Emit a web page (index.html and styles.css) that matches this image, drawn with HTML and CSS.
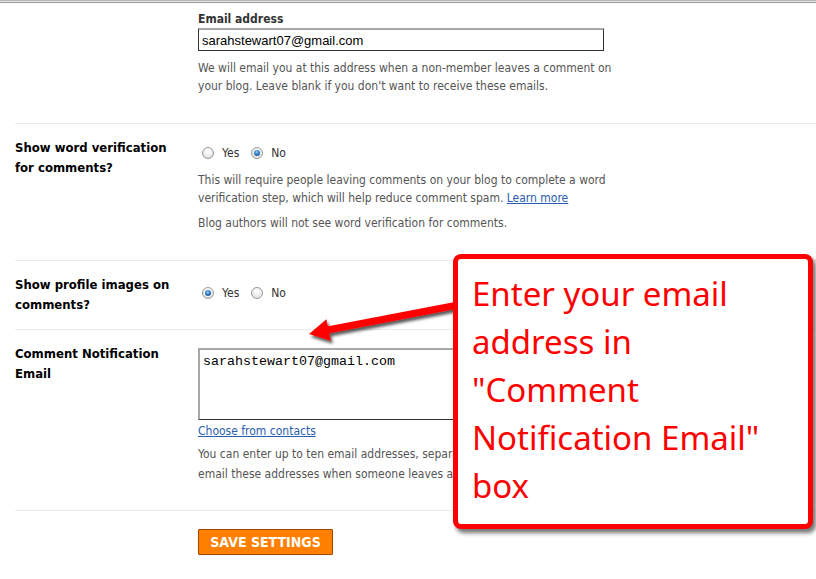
FILE: index.html
```html
<!DOCTYPE html>
<html>
<head>
<meta charset="utf-8">
<link rel="stylesheet" href="styles.css">
</head>
<body>
<div class="page">
  <div class="topline"></div>

  <div class="row first">
    <div class="label"></div>
    <div class="field">
      <div class="fieldlabel">Email address</div>
      <input class="textbox" type="text" value="sarahstewart07@gmail.com">
      <p class="help last">We will email you at this address when a non-member leaves a comment on<br>your blog. Leave blank if you don't want to receive these emails.</p>
    </div>
  </div>

  <div class="row">
    <div class="label">Show word verification<br>for comments?</div>
    <div class="field">
      <div class="radios r2">
        <span class="radio"></span><span class="opt">Yes</span>
        <span class="radio on"></span><span class="opt">No</span>
      </div>
      <p class="help">This will require people leaving comments on your blog to complete a word<br>verification step, which will help reduce comment spam. <a href="#">Learn more</a></p>
      <p class="help last">Blog authors will not see word verification for comments.</p>
    </div>
  </div>

  <div class="row">
    <div class="label">Show profile images on<br>comments?</div>
    <div class="field">
      <div class="radios r3">
        <span class="radio on"></span><span class="opt">Yes</span>
        <span class="radio"></span><span class="opt">No</span>
      </div>
    </div>
  </div>

  <div class="row">
    <div class="label">Comment Notification<br>Email</div>
    <div class="field">
      <textarea class="area">sarahstewart07@gmail.com</textarea>
      <a class="contacts" href="#">Choose from contacts</a>
      <p class="help last wide">You can enter up to ten email addresses, separated by commas. We will<br>email these addresses when someone leaves a comment on your blog.</p>
    </div>
  </div>

  <div class="actions">
    <button class="save">Save Settings</button>
  </div>

  <svg class="arrow" width="816" height="579" viewBox="0 0 816 579">
    <defs>
      <filter id="sh" x="-10%" y="-50%" width="120%" height="200%">
        <feDropShadow dx="2" dy="3" stdDeviation="1.5" flood-color="#000" flood-opacity="0.65"/>
      </filter>
    </defs>
    <g filter="url(#sh)">
      <line x1="325" y1="330.5" x2="458" y2="305" stroke="#ff0000" stroke-width="7"/>
      <polygon points="309,334 326.4,319.2 330.8,340.8" fill="#ff0000"/>
    </g>
  </svg>

  <div class="callout">
    <p class="callout-text">Enter your email<br>address in<br>"Comment<br>Notification Email"<br>box</p>
  </div>
</div>
</body>
</html>
```

FILE: styles.css
```css
html, body {
  margin: 0;
  padding: 0;
  background: #fff;
}
.page {
  position: relative;
  width: 816px;
  height: 579px;
  overflow: hidden;
  font-family: "DejaVu Sans Condensed", "DejaVu Sans", sans-serif;
  font-stretch: condensed;
}
.topline {
  height: 1px;
  border-top: 1px solid #b8b8b8;
  border-bottom: 1px solid #9a9a9a;
  background: #e4e4e4;
}
.row {
  display: flex;
  margin-left: 15px;
  padding: 14px 0;
  border-bottom: 1px solid #ebebeb;
}
.row.first {
  padding-top: 7px;
}
.label {
  width: 183px;
  flex: none;
  font-size: 13px;
  font-weight: bold;
  line-height: 20px;
  color: #000;
}
.field {
  flex: 1;
}
.fieldlabel {
  font-size: 12px;
  font-weight: bold;
  color: #333;
  line-height: 18px;
}
.textbox {
  display: block;
  box-sizing: border-box;
  width: 406px;
  height: 23px;
  margin: 0;
  padding: 0 3px;
  border: 1px solid #333;
  border-top: 2px solid #a8a8a8;
  font-family: "Liberation Sans", Arial, sans-serif;
  font-size: 13px;
  color: #000;
  outline: none;
}
.help {
  margin: 8px 0 0;
  font-size: 12px;
  line-height: 18px;
  color: #555;
}
.help + .help {
  margin-top: 7px;
}
.help.last {
  margin-bottom: 14px;
}
.help.wide {
  margin-top: 4px;
  line-height: 20px;
  margin-bottom: 12px;
}
.help a, .contacts {
  color: #2a5db0;
  text-decoration: underline;
}
.radios {
  display: flex;
  align-items: center;
  height: 20px;
  font-size: 12px;
  color: #333;
}
.radios.r2 { margin-top: 5px; }
.radios.r3 { margin-top: 8px; }
.radio {
  box-sizing: border-box;
  width: 12px;
  height: 12px;
  border-radius: 50%;
  border: 1px solid #9a9a9a;
  background: radial-gradient(circle at 50% 35%, #ffffff 0%, #f0f0f0 45%, #d6d6d6 100%);
  margin-left: 4px;
  margin-right: 8px;
  position: relative;
}
.radio.on::after {
  content: "";
  position: absolute;
  left: 2px;
  top: 2px;
  width: 6px;
  height: 6px;
  border-radius: 50%;
  background: radial-gradient(circle at 45% 35%, #9fd0f5 0%, #2f7cc4 45%, #0a3f78 100%);
}
.opt {
  margin-right: 8px;
}
.area {
  display: block;
  box-sizing: border-box;
  width: 406px;
  height: 72px;
  margin: 4px 0 0;
  padding: 5px 3px 3px;
  border: 1px solid #333;
  border-top: 2px solid #a8a8a8;
  border-left: 2px solid #a8a8a8;
  font-family: "Liberation Mono", "Courier New", monospace;
  font-size: 13.33px;
  line-height: 14px;
  color: #000;
  resize: none;
  outline: none;
}
.contacts {
  display: block;
  margin-top: 2px;
  font-size: 12px;
  line-height: 18px;
}
.actions {
  padding: 18px 0 0 198px;
}
.save {
  display: block;
  box-sizing: border-box;
  height: 26px;
  width: 135px;
  margin: 0;
  padding: 0;
  background: #ff7f00;
  border: 1px solid #a84600;
  border-radius: 1px;
  color: #fff;
  font-family: "DejaVu Sans Condensed", "DejaVu Sans", sans-serif;
  font-stretch: condensed;
  font-weight: bold;
  font-size: 14px;
  text-transform: uppercase;
}
.arrow {
  position: absolute;
  left: 0;
  top: 0;
  pointer-events: none;
}
.callout {
  position: absolute;
  left: 453px;
  top: 254px;
  width: 360px;
  height: 275px;
  box-sizing: border-box;
  border: 5px solid #ff0000;
  border-radius: 8px;
  background: #fff;
  box-shadow: 3px 4px 4px rgba(0, 0, 0, 0.55);
  padding: 11px 14px 0;
}
.callout-text {
  margin: 0;
  font-family: "Noto Sans", "Open Sans", sans-serif;
  font-size: 33px;
  line-height: 48px;
  color: #ff0000;
}
```
